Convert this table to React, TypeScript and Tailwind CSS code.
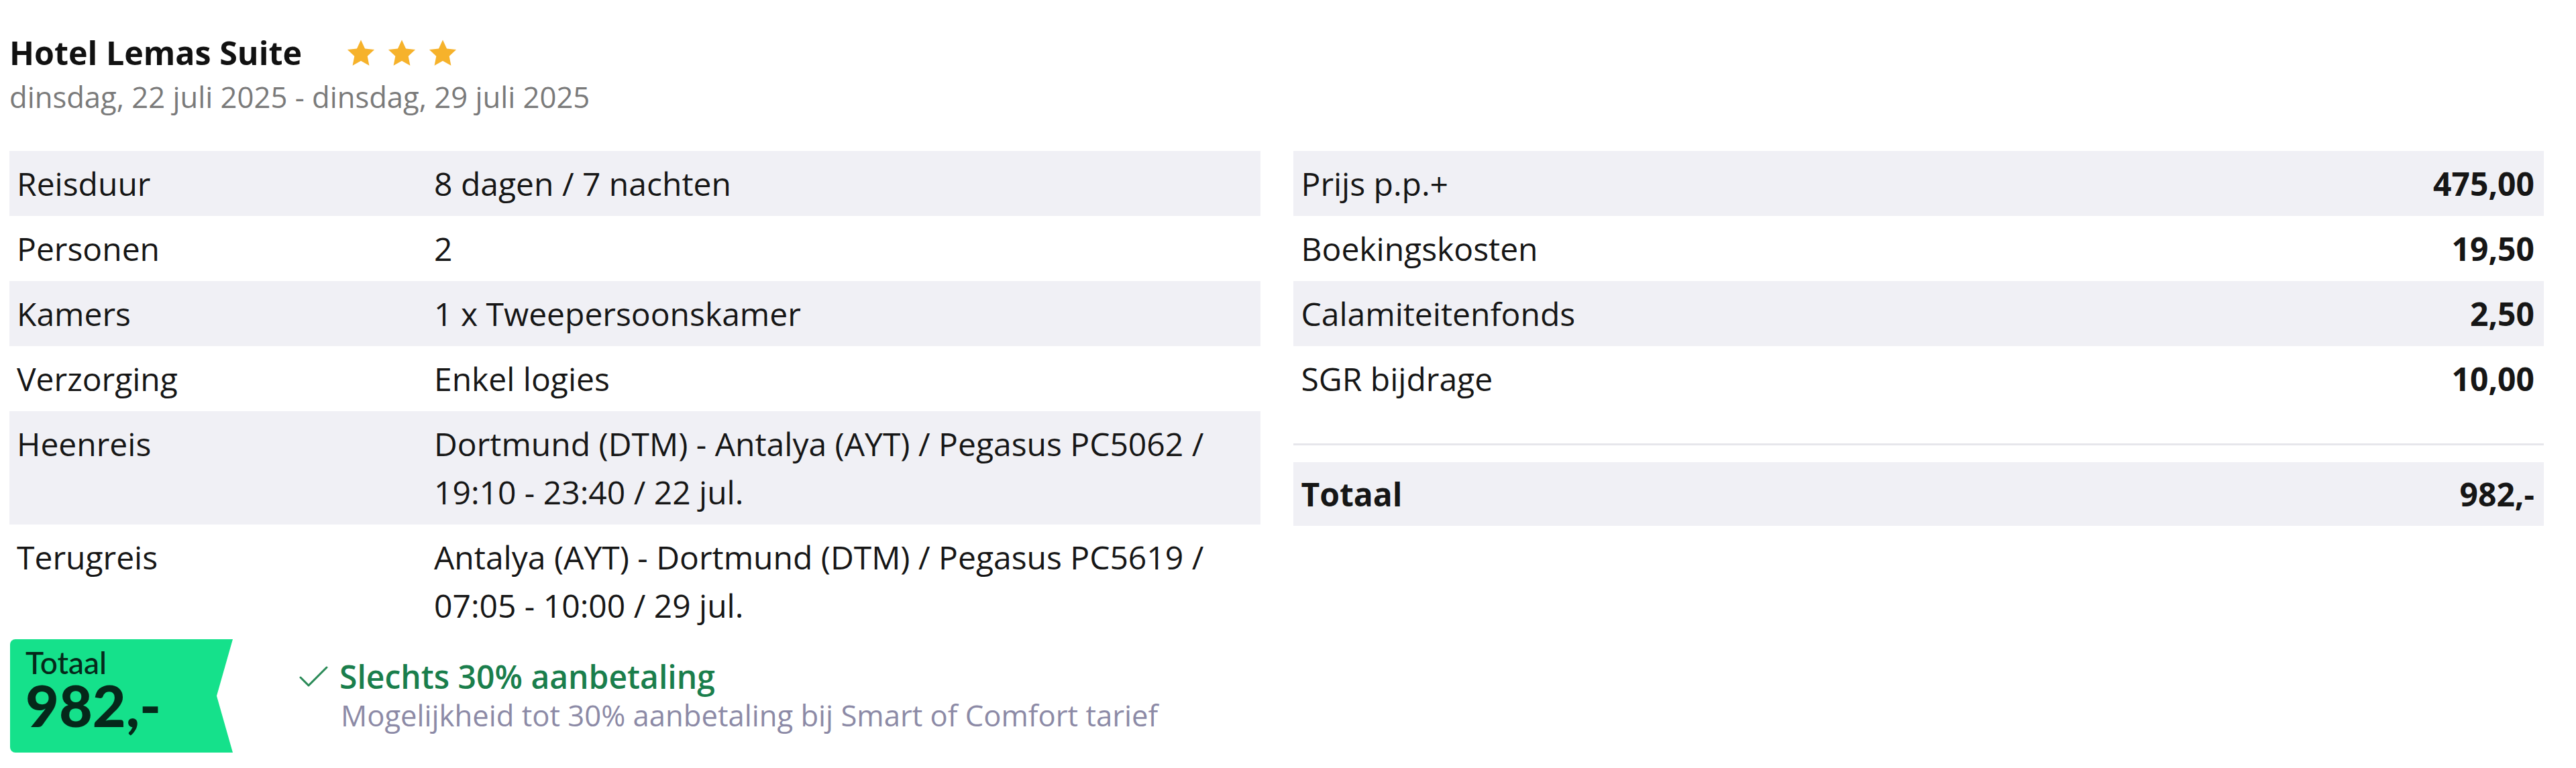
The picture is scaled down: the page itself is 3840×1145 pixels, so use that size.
import React from "react";

function Star() {
  return (
    <svg width="44" height="42" viewBox="0 0 24 23" className="block">
      <path
        d="M12 0.8l3.3 7.1 7.7 0.9-5.7 5.3 1.5 7.7L12 17.9l-6.8 3.9 1.5-7.7L1 8.8l7.7-0.9z"
        fill="#f6b22b"
      />
    </svg>
  );
}

const leftRows: { label: string; value: React.ReactNode }[] = [
  { label: "Reisduur", value: "8 dagen / 7 nachten" },
  { label: "Personen", value: "2" },
  { label: "Kamers", value: "1 x Tweepersoonskamer" },
  { label: "Verzorging", value: "Enkel logies" },
  {
    label: "Heenreis",
    value: (
      <>
        Dortmund (DTM) - Antalya (AYT) / Pegasus PC5062 /<br />
        19:10 - 23:40 / 22 jul.
      </>
    ),
  },
  {
    label: "Terugreis",
    value: (
      <>
        Antalya (AYT) - Dortmund (DTM) / Pegasus PC5619 /<br />
        07:05 - 10:00 / 29 jul.
      </>
    ),
  },
];

const rightRows = [
  { label: "Prijs p.p.+", value: "475,00" },
  { label: "Boekingskosten", value: "19,50" },
  { label: "Calamiteitenfonds", value: "2,50" },
  { label: "SGR bijdrage", value: "10,00" },
];

export default function App() {
  return (
    <div className="min-h-[1145px] bg-white pl-[14px] pr-[48px] pt-[44px] font-['Open_Sans',sans-serif] text-[#161616]">
      {/* header */}
      <div className="flex items-center">
        <h1 className="text-[48.4px] font-bold leading-[68px] text-[#111]">Hotel Lemas Suite</h1>
        <div className="ml-[66px] flex gap-[17px] pt-[2px]">
          <Star />
          <Star />
          <Star />
        </div>
      </div>
      <div className="mt-[3px] text-[43.6px] leading-[59px] text-[#7a7a7a]">
        dinsdag, 22 juli 2025 - dinsdag, 29 juli 2025
      </div>

      <div className="mt-[51px] grid grid-cols-2 gap-x-[49px]">
        {/* left column */}
        <div>
          <div className="text-[48px] leading-[72px]">
            {leftRows.map((r, i) => (
              <div
                key={r.label}
                className={`grid grid-cols-[633px_1fr] py-[12.5px] ${i % 2 === 0 ? "bg-[#f0f0f5]" : ""}`}
              >
                <div className="pl-[11px]">{r.label}</div>
                <div>{r.value}</div>
              </div>
            ))}
          </div>

          <div className="mt-[2px] flex items-center">
            <div className="ml-[1px] flex h-[169px] w-[332px] flex-col rounded-l-[8px] bg-[#15e18b] pl-[23px] pt-[12px] font-['Lato',sans-serif] text-[#05281a] [clip-path:polygon(0_0,100%_0,calc(100%_-_24px)_50%,100%_100%,0_100%)]">
              <span className="text-[46px] font-medium leading-[46px]">Totaal</span>
              <span className="mt-[2px] text-[86px] font-black leading-[76px]">982,-</span>
            </div>
            <div className="ml-[99px] -mt-[2px] flex flex-col">
              <div className="flex items-center">
                <svg width="44" height="34" viewBox="0 0 44 34" className="mr-[16px] block">
                  <polyline
                    points="2,18 14,30 41,3"
                    fill="none"
                    stroke="#2a8a57"
                    strokeWidth="3"
                    strokeLinecap="round"
                    strokeLinejoin="round"
                  />
                </svg>
                <span className="text-[48px] font-semibold leading-[58px] text-[#1a7e4c]">
                  Slechts 30% aanbetaling
                </span>
              </div>
              <div className="pl-[62px] text-[43.6px] leading-[56px] text-[#8c8aa6]">
                Mogelijkheid tot 30% aanbetaling bij Smart of Comfort tarief
              </div>
            </div>
          </div>
        </div>

        {/* right column */}
        <div>
          <div className="text-[48px] leading-[72px]">
            {rightRows.map((r, i) => (
              <div
                key={r.label}
                className={`flex justify-between py-[12.5px] pl-[12px] pr-[14px] ${i % 2 === 0 ? "bg-[#f0f0f5]" : ""}`}
              >
                <span>{r.label}</span>
                <span className="font-bold">{r.value}</span>
              </div>
            ))}
          </div>
          <div className="mt-[48px] border-t-[3px] border-[#e6e6eb]" />
          <div className="mt-[25px] flex justify-between bg-[#f0f0f5] py-[11.5px] pl-[12px] pr-[14px] text-[48px] font-bold leading-[72px]">
            <span>Totaal</span>
            <span>982,-</span>
          </div>
        </div>
      </div>
    </div>
  );
}
